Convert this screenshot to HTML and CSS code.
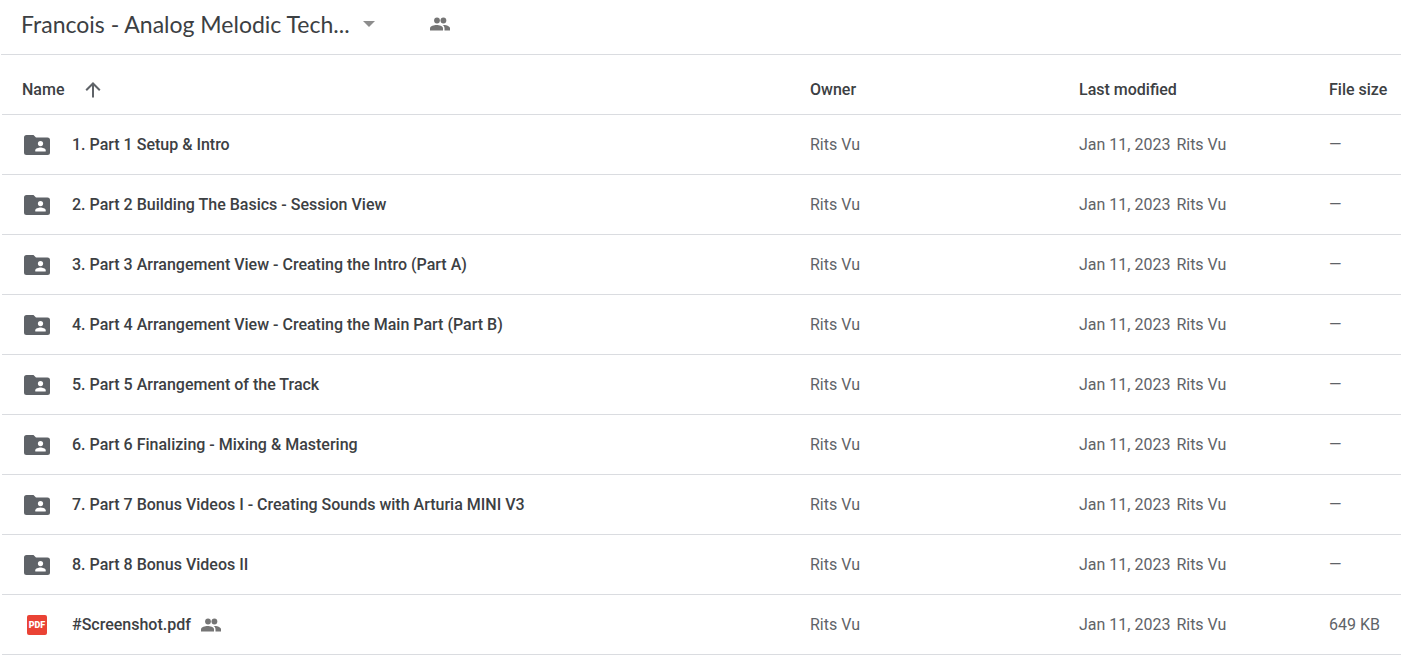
FILE: index.html
```html
<!DOCTYPE html>
<html lang="en">
<head>
  <meta charset="UTF-8" />
  <meta name="viewport" content="width=device-width, initial-scale=1.0"/>
  <title>Francois - Analog Melodic Tech...</title>
  <link rel="stylesheet" href="styles.css">
</head>
<body>
  <!-- shared icons -->
  <svg class="icon-defs" aria-hidden="true">
    <symbol id="icon-folder" viewBox="0 0 26 20">
      <path fill="#5f6368" d="M2.500 0H9.500L12 2.500H23.500A2.500 2.500 0 0 1 26 5V17.500A2.500 2.500 0 0 1 23.500 20H2.500A2.500 2.500 0 0 1 0 17.500V2.500A2.500 2.500 0 0 1 2.500 0Z"/>
      <circle cx="16.500" cy="8.600" r="2.600" fill="#fff"/>
      <path fill="#fff" d="M11.300 16.600V15.300C11.300 13.500 14.700 12.600 16.500 12.600S21.700 13.500 21.700 15.300V16.600Z"/>
    </symbol>
    <symbol id="icon-people" viewBox="0 0 20 14">
      <circle cx="7" cy="3.500" r="2.900"/>
      <circle cx="13.400" cy="3.500" r="2.900"/>
      <path d="M0 13.500V11.200C0 8.900 4.200 7.900 6.600 7.900S13 8.900 13 11.200V13.500Z"/>
      <path d="M12.600 8C16 7.600 20 9 20 11.200V13.500H14.500V11.200C14.500 9.800 13.700 8.700 12.600 8Z"/>
    </symbol>
  </svg>

  <header>
    <h1><button class="title-btn">Francois - Analog Melodic Tech...
      <svg class="caret" viewBox="0 0 12 6"><path d="M0 0H12L6 6Z"/></svg>
    </button></h1>
    <button class="share-btn" aria-label="Manage people">
      <svg class="people"><use href="#icon-people"/></svg>
    </button>
  </header>

  <table class="file-list">
    <thead>
      <tr>
        <th class="name">
          <button class="sort-btn">Name
            <svg class="arrow" viewBox="0 0 16 16"><path d="M8 15.500V2M1.200 8.300L8 1.500L14.800 8.300"/></svg>
          </button>
        </th>
        <th class="owner">Owner</th>
        <th class="modified">Last modified</th>
        <th class="size">File size</th>
      </tr>
    </thead>
    <tbody>
      <tr>
        <td><a href="#"><svg class="folder"><use href="#icon-folder"/></svg>1. Part 1 Setup &amp; Intro</a></td>
        <td>Rits Vu</td>
        <td>Jan 11, 2023 <span class="by">Rits Vu</span></td>
        <td>—</td>
      </tr>
      <tr>
        <td><a href="#"><svg class="folder"><use href="#icon-folder"/></svg>2. Part 2 Building The Basics - Session View</a></td>
        <td>Rits Vu</td>
        <td>Jan 11, 2023 <span class="by">Rits Vu</span></td>
        <td>—</td>
      </tr>
      <tr>
        <td><a href="#"><svg class="folder"><use href="#icon-folder"/></svg>3. Part 3 Arrangement View - Creating the Intro (Part A)</a></td>
        <td>Rits Vu</td>
        <td>Jan 11, 2023 <span class="by">Rits Vu</span></td>
        <td>—</td>
      </tr>
      <tr>
        <td><a href="#"><svg class="folder"><use href="#icon-folder"/></svg>4. Part 4 Arrangement View - Creating the Main Part (Part B)</a></td>
        <td>Rits Vu</td>
        <td>Jan 11, 2023 <span class="by">Rits Vu</span></td>
        <td>—</td>
      </tr>
      <tr>
        <td><a href="#"><svg class="folder"><use href="#icon-folder"/></svg>5. Part 5 Arrangement of the Track</a></td>
        <td>Rits Vu</td>
        <td>Jan 11, 2023 <span class="by">Rits Vu</span></td>
        <td>—</td>
      </tr>
      <tr>
        <td><a href="#"><svg class="folder"><use href="#icon-folder"/></svg>6. Part 6 Finalizing - Mixing &amp; Mastering</a></td>
        <td>Rits Vu</td>
        <td>Jan 11, 2023 <span class="by">Rits Vu</span></td>
        <td>—</td>
      </tr>
      <tr>
        <td><a href="#"><svg class="folder"><use href="#icon-folder"/></svg>7. Part 7 Bonus Videos I - Creating Sounds with Arturia MINI V3</a></td>
        <td>Rits Vu</td>
        <td>Jan 11, 2023 <span class="by">Rits Vu</span></td>
        <td>—</td>
      </tr>
      <tr>
        <td><a href="#"><svg class="folder"><use href="#icon-folder"/></svg>8. Part 8 Bonus Videos II</a></td>
        <td>Rits Vu</td>
        <td>Jan 11, 2023 <span class="by">Rits Vu</span></td>
        <td>—</td>
      </tr>
      <tr>
        <td><a href="#"><span class="pdf">PDF</span>#Screenshot.pdf<svg class="people shared"><use href="#icon-people"/></svg></a></td>
        <td>Rits Vu</td>
        <td>Jan 11, 2023 <span class="by">Rits Vu</span></td>
        <td>649 KB</td>
      </tr>
    </tbody>
  </table>
</body>
</html>
```
FILE: styles.css
```css
* {
  box-sizing: border-box;
}

body {
  margin: 0;
  font-family: Roboto, Arial, sans-serif;
  font-size: 16px;
  line-height: 20px;
  background-color: #fff;
  color: #3c4043;
}

button {
  display: flex;
  align-items: center;
  padding: 0;
  border: none;
  background: none;
  font: inherit;
  color: inherit;
  cursor: pointer;
}

.icon-defs {
  position: absolute;
  width: 0;
  height: 0;
}

header {
  display: flex;
  align-items: center;
  height: 55px;
  margin-left: 1px;
  padding: 0 20px 6px;
  border-bottom: 1px solid #dadce0;
}

header h1 {
  margin: 0;
  font-family: Lato, Roboto, sans-serif;
  font-size: 23px;
  font-weight: 400;
  line-height: 28px;
}

.caret {
  width: 12px;
  height: 6px;
  margin-left: 13px;
  fill: #8d8d8d;
}

.share-btn {
  margin-left: 55px;
}

.people {
  width: 20px;
  height: 14px;
  fill: #757575;
}

.file-list {
  width: calc(100% - 2px);
  margin-left: 2px;
  border-spacing: 0;
  table-layout: fixed;
}

th,
td {
  height: 60px;
  padding: 0;
  border-bottom: 1px solid #dadce0;
  text-align: left;
  white-space: nowrap;
}

th {
  padding-top: 10px;
  font-weight: 500;
}

td {
  color: #5f6368;
}

th:first-child,
td:first-child {
  padding-left: 20px;
}

.owner {
  width: 269px;
}

.modified {
  width: 250px;
}

.size {
  width: 72px;
}

.arrow {
  width: 16px;
  height: 16px;
  margin-left: 21px;
  fill: none;
  stroke: #5f6368;
  stroke-width: 2;
}

td a {
  display: flex;
  align-items: center;
  color: #3c4043;
  font-weight: 500;
  text-decoration: none;
}

td a:hover {
  text-decoration: underline;
}

.folder {
  width: 26px;
  height: 20px;
  margin: 0 22px 0 2px;
}

.pdf {
  width: 20px;
  height: 20px;
  margin: 0 25px 0 5px;
  border-radius: 2px;
  background-color: #ea4335;
  color: #fff;
  font-size: 9px;
  font-weight: 900;
  line-height: 20px;
  text-align: center;
}

.shared {
  margin-left: 10px;
}

.by {
  margin-left: 2px;
}
```
